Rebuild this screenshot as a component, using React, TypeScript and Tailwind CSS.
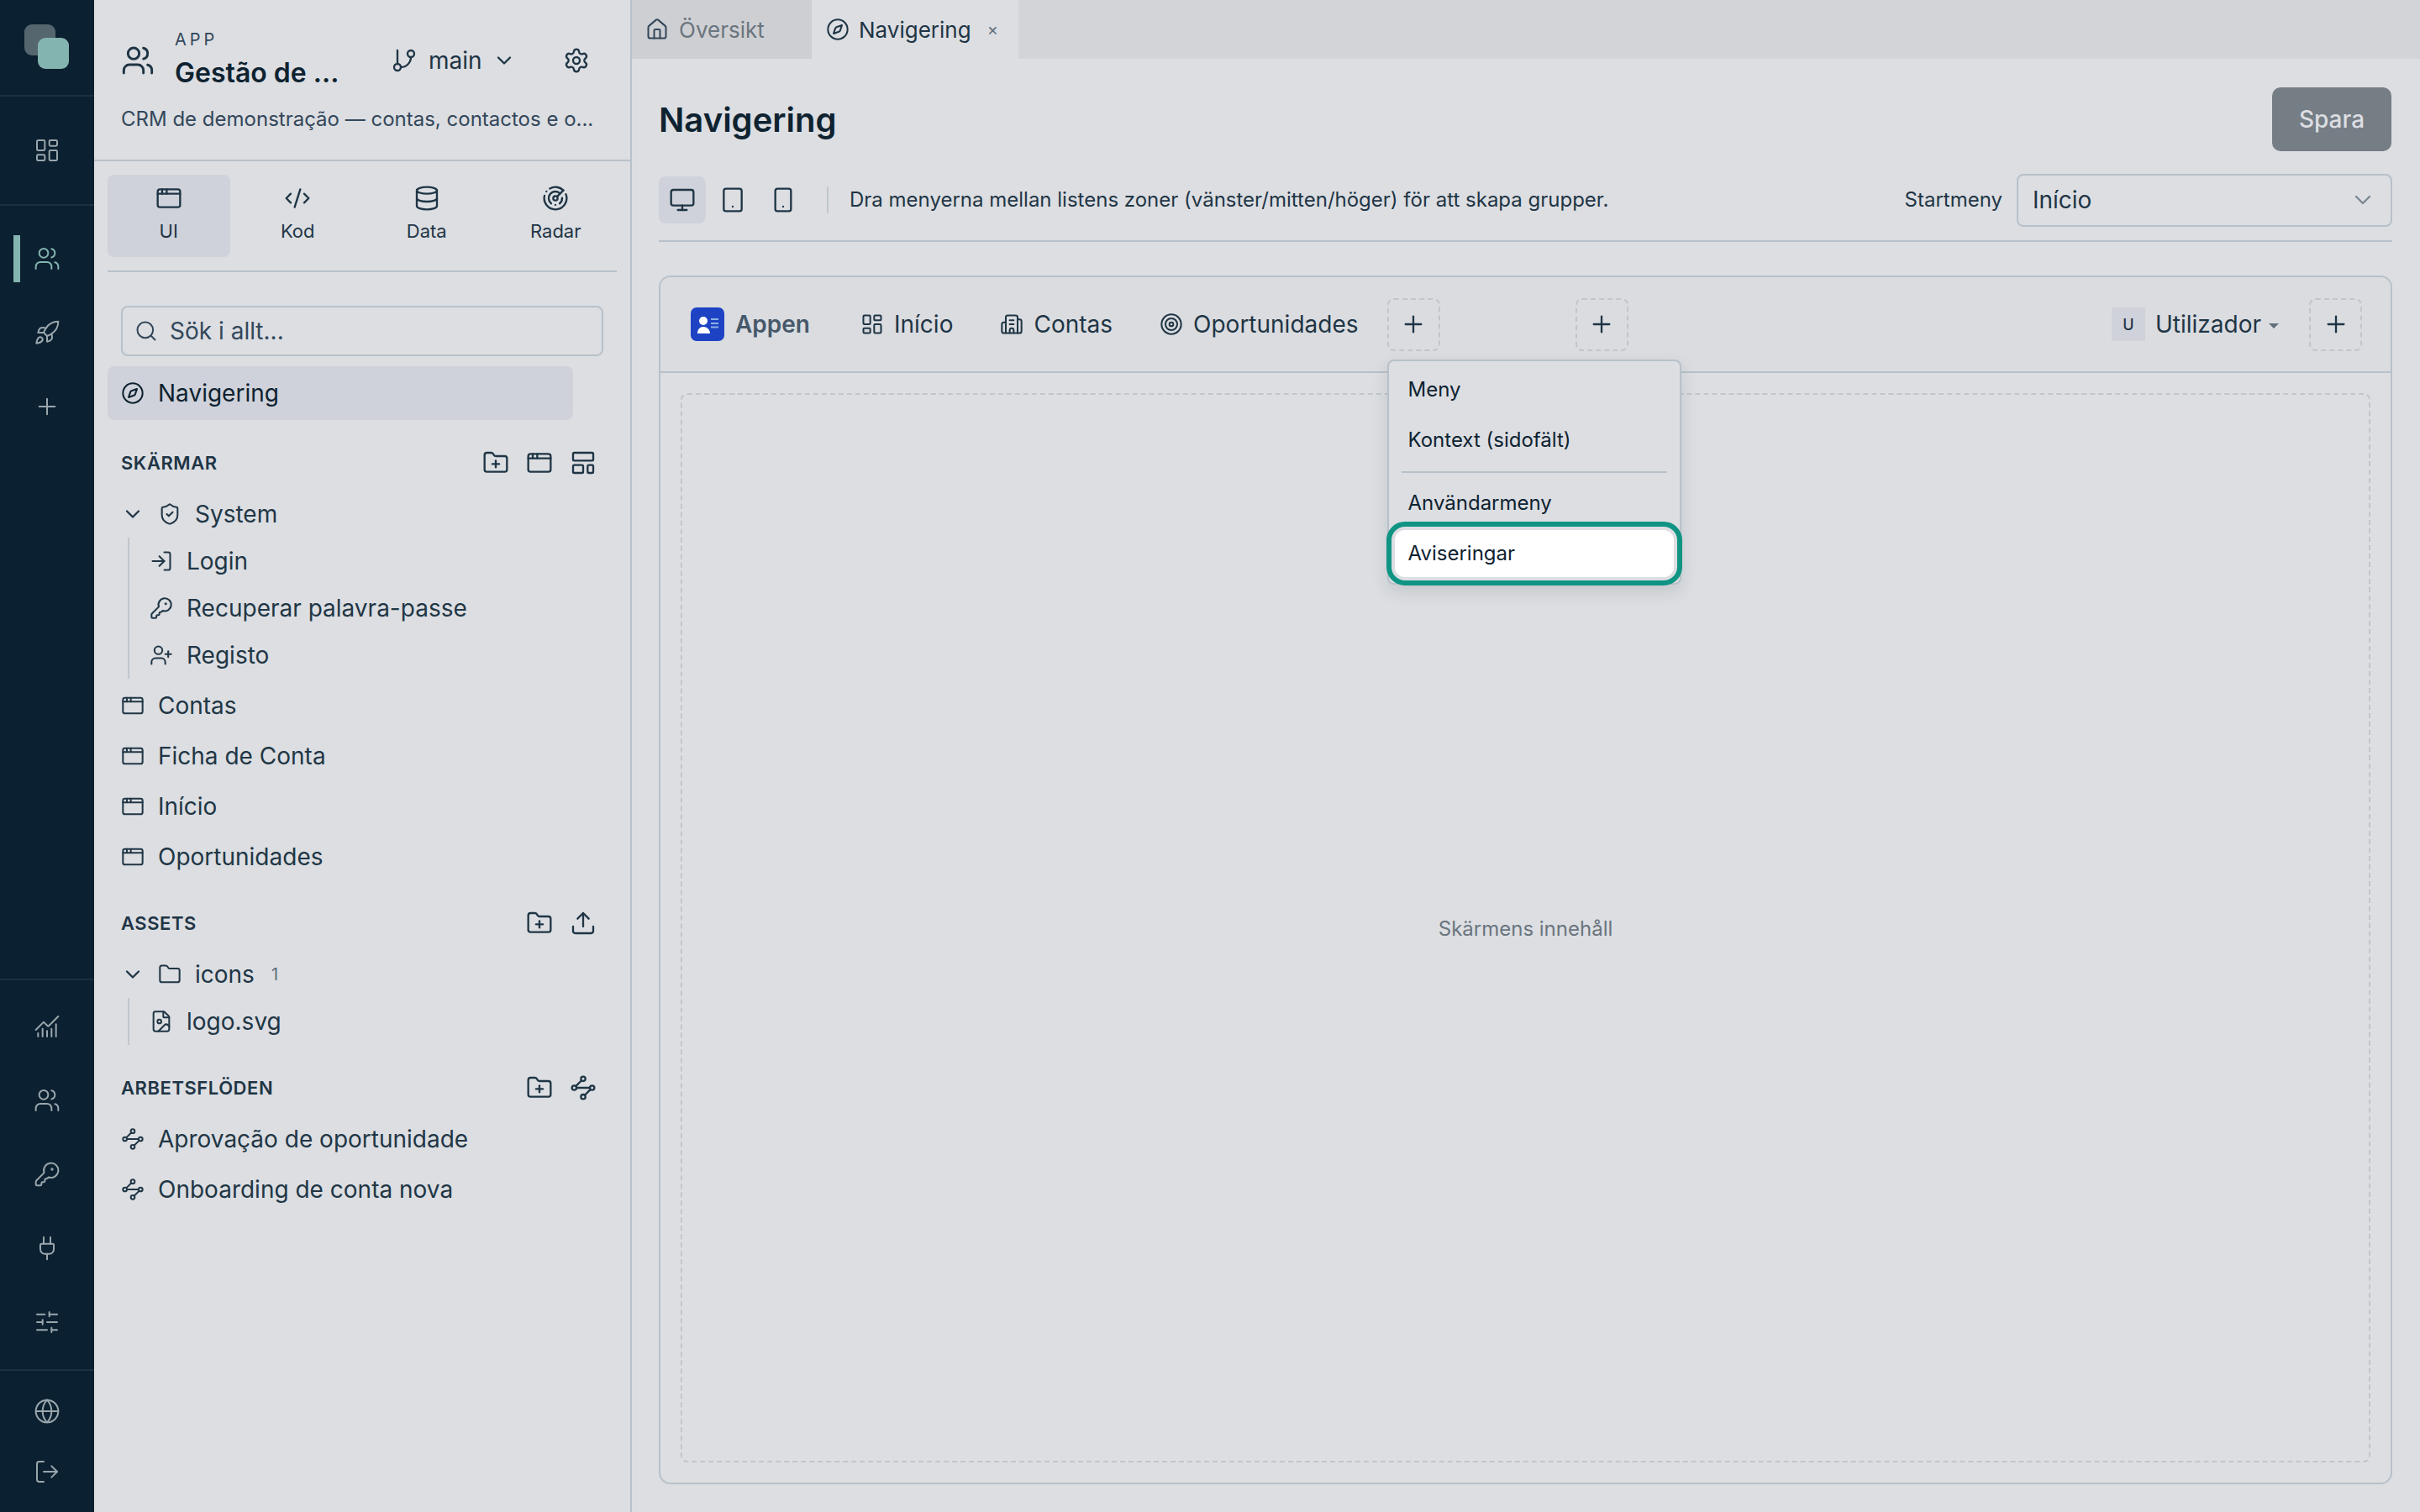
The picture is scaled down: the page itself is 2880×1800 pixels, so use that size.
import React from 'react';
import {
  AppWindow,
  Building2,
  ChartNoAxesCombined,
  ChevronDown,
  CodeXml,
  Compass,
  Database,
  FileImage,
  Folder,
  FolderPlus,
  GitBranch,
  Globe,
  House,
  KeyRound,
  LayoutDashboard,
  LayoutTemplate,
  LogIn,
  LogOut,
  Monitor,
  Plug,
  Plus,
  Radar,
  Rocket,
  Search,
  Settings,
  ShieldCheck,
  SlidersHorizontal,
  Smartphone,
  Tablet,
  Target,
  Upload,
  UserPlus,
  Users,
} from 'lucide-react';

// workflow glyph, same idea as lucide waypoints but with smaller nodes
const Flow = ({ size = 28, strokeWidth = 2 }: { size?: number; strokeWidth?: number }) => (
  <svg width={size} height={size} viewBox="0 0 24 24" fill="none" stroke="currentColor" strokeWidth={strokeWidth}>
    <circle cx="12" cy="4" r="2" />
    <circle cx="4" cy="12" r="2" />
    <circle cx="20" cy="12" r="2" />
    <circle cx="12" cy="20" r="2" />
    <path d="M10.6 5.4 5.4 10.6M6 12h12M13.4 18.6l5.2-5.2" />
  </svg>
);

const RailItem = ({ icon: Icon, active, tall }: { icon: any; active?: boolean; tall?: boolean }) => (
  <div className={`relative flex items-center justify-center ${tall ? 'h-[72px]' : 'h-[88px]'}`}>
    {active && <div className="absolute left-[16px] top-[16px] h-[56px] w-[8px] bg-[#84b4b0]" />}
    <Icon size={32} strokeWidth={1.5} className={active ? 'text-[#84b4b0]' : 'text-[#9aa6ad]'} />
  </div>
);

const Rail = () => (
  <div className="flex w-[112px] shrink-0 flex-col bg-[#0b2030]">
    <div className="h-[115px] border-b-2 border-[#1a3141] pl-[29px] pt-[29px]">
      <svg width="53" height="53" viewBox="0 0 53 53">
        <rect x="0" y="0" width="37" height="37" rx="9" fill="#56666f" />
        <rect x="16" y="16" width="37" height="37" rx="9" fill="#84b4b0" />
      </svg>
    </div>
    <div className="flex h-[130px] items-center justify-center border-b-2 border-[#1a3141]">
      <LayoutDashboard size={32} strokeWidth={1.5} className="text-[#9aa6ad]" />
    </div>
    <div className="flex-1 pt-[19px]">
      <RailItem icon={Users} active />
      <RailItem icon={Rocket} />
      <RailItem icon={Plus} />
    </div>
    <div className="border-t-2 border-[#1a3141] pb-[12px] pt-[11px]">
      <RailItem icon={ChartNoAxesCombined} />
      <RailItem icon={Users} />
      <RailItem icon={KeyRound} />
      <RailItem icon={Plug} />
      <RailItem icon={SlidersHorizontal} />
    </div>
    <div className="h-[170px] border-t-2 border-[#1a3141] pt-[12px]">
      <RailItem icon={Globe} tall />
      <RailItem icon={LogOut} tall />
    </div>
  </div>
);

const SectionHeader = ({ title, icons }: { title: string; icons: any[] }) => (
  <div className="ml-[32px] mr-[40px] flex h-[40px] items-center justify-between">
    <span className="text-[22px] font-semibold tracking-[0.55px] text-[#1f3545]">{title}</span>
    <div className="flex items-center gap-[20px] text-[#1f3545]">
      {icons.map((Icon, i) => (
        <Icon key={i} size={32} strokeWidth={1.75} />
      ))}
    </div>
  </div>
);

const TreeRow = ({ icon: Icon, label }: { icon: any; label: string }) => (
  <div className="flex h-[60px] items-center gap-[16px] pl-[32px] text-[28px] text-[#213645]">
    <Icon size={28} strokeWidth={1.75} />
    <span>{label}</span>
  </div>
);

const ChildRow = ({ icon: Icon, label }: { icon: any; label: string }) => (
  <div className="flex h-[56px] items-center gap-[16px] text-[28px] text-[#213645]">
    <Icon size={28} strokeWidth={1.75} />
    <span>{label}</span>
  </div>
);

const GroupRow = ({ icon: Icon, label, count }: { icon: any; label: string; count?: string }) => (
  <div className="mt-[13px] flex h-[56px] items-center pl-[32px] text-[28px] text-[#213645]">
    <ChevronDown size={28} strokeWidth={2} />
    <Icon size={28} strokeWidth={1.75} className="ml-[16px]" />
    <span className="ml-[16px]">{label}</span>
    {count && <span className="ml-[20px] text-[20px] text-[#5f6e7a]">{count}</span>}
  </div>
);

const Sidebar = () => (
  <div className="w-[640px] shrink-0 border-r-2 border-[#b8c1c9] bg-[#dcdee2]">
    <div className="h-[192px] border-b-2 border-[#b8c1c9] px-[32px] pt-[32px]">
      <div className="flex h-[80px] items-center">
        <Users size={40} strokeWidth={1.75} className="text-[#1f3545]" />
        <div className="ml-[24px] w-[224px]">
          <div className="text-[20px] leading-[30px] tracking-[4px] text-[#33475a]">APP</div>
          <div className="text-[32px] font-semibold leading-[50px] text-[#0e2230]">Gestão de ...</div>
        </div>
        <GitBranch size={32} strokeWidth={1.75} className="ml-[33px] text-[#1f3545]" />
        <span className="ml-[13px] text-[28px] text-[#1f3545]">main</span>
        <ChevronDown size={28} strokeWidth={2} className="ml-[12px] text-[#1f3545]" />
        <Settings size={32} strokeWidth={1.75} className="ml-[56px] text-[#1f3545]" />
      </div>
      <div className="mt-[15px] whitespace-nowrap text-[24px] leading-[30px] text-[#33475a]">
        CRM de demonstração — contas, contactos e o...
      </div>
    </div>

    <div className="mx-[16px] grid w-[606px] grid-cols-4 gap-[8px] border-b-2 border-[#b8c1c9] pb-[16px] pt-[16px]">
      {[
        { icon: AppWindow, label: 'UI', active: true },
        { icon: CodeXml, label: 'Kod' },
        { icon: Database, label: 'Data' },
        { icon: Radar, label: 'Radar' },
      ].map((t) => (
        <div
          key={t.label}
          className={`flex h-[98px] flex-col items-center gap-[8px] rounded-[8px] pt-[12px] text-[22px] text-[#1f3545] ${
            t.active ? 'bg-[#cfd2da]' : ''
          }`}
        >
          <t.icon size={32} strokeWidth={1.75} />
          <span className="leading-[30px]">{t.label}</span>
        </div>
      ))}
    </div>

    <div className="ml-[32px] mt-[40px] flex h-[60px] w-[574px] items-center gap-[14px] rounded-[8px] border-2 border-[#b8c1c9] pl-[14px] text-[28px] text-[#33475a]">
      <Search size={28} strokeWidth={1.75} />
      <span>Sök i allt...</span>
    </div>
    <div className="ml-[16px] mt-[12px] flex h-[64px] w-[554px] items-center gap-[16px] rounded-[8px] bg-[#cfd2da] pl-[16px] text-[28px] text-[#0e2230]">
      <Compass size={28} strokeWidth={1.75} />
      <span>Navigering</span>
    </div>

    <div className="mt-[31px]">
      <SectionHeader title="SKÄRMAR" icons={[FolderPlus, AppWindow, LayoutTemplate]} />
      <GroupRow icon={ShieldCheck} label="System" />
      <div className="ml-[40px] border-l-2 border-[#c0c6cd] pl-[24px]">
        <ChildRow icon={LogIn} label="Login" />
        <ChildRow icon={KeyRound} label="Recuperar palavra-passe" />
        <ChildRow icon={UserPlus} label="Registo" />
      </div>
      <div className="mt-[2px]">
        <TreeRow icon={AppWindow} label="Contas" />
        <TreeRow icon={AppWindow} label="Ficha de Conta" />
        <TreeRow icon={AppWindow} label="Início" />
        <TreeRow icon={AppWindow} label="Oportunidades" />
      </div>
    </div>

    <div className="mt-[29px]">
      <SectionHeader title="ASSETS" icons={[FolderPlus, Upload]} />
      <GroupRow icon={Folder} label="icons" count="1" />
      <div className="ml-[40px] border-l-2 border-[#c0c6cd] pl-[24px]">
        <ChildRow icon={FileImage} label="logo.svg" />
      </div>
    </div>

    <div className="mt-[31px]">
      <SectionHeader title="ARBETSFLÖDEN" icons={[FolderPlus, Flow]} />
      <div className="mt-[11px]">
        <TreeRow icon={Flow} label="Aprovação de oportunidade" />
        <TreeRow icon={Flow} label="Onboarding de conta nova" />
      </div>
    </div>
  </div>
);

const AppLogo = () => (
  <svg width="40" height="40" viewBox="0 0 40 40">
    <rect width="40" height="40" rx="7" fill="#1d43c4" />
    <circle cx="15" cy="16" r="5" fill="#fff" />
    <path d="M8 31c0-5 3-8 7-8s8 3 8 8z" fill="#fff" />
    <path d="M24 14h9M24 19h9M24 23.5h9" stroke="#8fb0e8" strokeWidth="2.2" />
  </svg>
);

const AddButton = ({ className }: { className?: string }) => (
  <div
    className={`flex h-[63px] w-[63px] items-center justify-center rounded-[8px] border-2 border-dashed border-[#c0c6cd] text-[#1f3545] ${className ?? ''}`}
  >
    <Plus size={32} strokeWidth={1.75} />
  </div>
);

const AddMenu = () => (
  <div className="absolute left-0 top-[73px] z-10 w-[350px] rounded-[8px] border-2 border-[#b8c1c9] bg-[#dcdee2] px-[7px] pb-[7px] pt-[6px] text-[24px] text-[#0e2230] shadow-[0_8px_20px_rgba(15,30,45,0.12)]">
    <div className="flex h-[56px] items-center px-[16px]">Meny</div>
    <div className="mt-[4px] flex h-[56px] items-center px-[16px]">Kontext (sidofält)</div>
    <div className="mx-[8px] mb-[8px] mt-[9px] h-[2px] bg-[#b8c1c9]" />
    <div className="flex h-[56px] items-center px-[16px]">Användarmeny</div>
    <div className="mt-[4px] flex h-[56px] items-center rounded-[12px] bg-white px-[16px] outline-[6px] outline-offset-[4px] outline-[#0f9484]">
      Aviseringar
    </div>
  </div>
);

const Main = () => (
  <div className="flex min-w-0 flex-1 flex-col bg-[#dcdee2]">
    <div className="flex h-[70px] shrink-0 bg-[#d2d4d8] text-[26px]">
      <div className="flex w-[214px] items-center gap-[12px] bg-[#cecfd3] pl-[16px] text-[#6a757e]">
        <House size={28} strokeWidth={1.75} className="text-[#33475a]" />
        <span>Översikt</span>
      </div>
      <div className="flex w-[246px] items-center gap-[11px] bg-[#dcdee2] pl-[17px] text-[#1f3545]">
        <Compass size={28} strokeWidth={1.75} />
        <span>Navigering</span>
        <span className="ml-[8px] text-[20px] text-[#5f6e7a]">×</span>
      </div>
    </div>

    <div className="flex flex-1 flex-col pb-[33px] pl-[32px] pr-[33px] pt-[34px]">
      <div className="flex h-[76px] items-center justify-between">
        <h1 className="pt-[2px] text-[40px] font-semibold text-[#0e2230]">Navigering</h1>
        <button className="mr-[1px] flex h-[76px] w-[142px] items-center justify-center rounded-[10px] bg-[#757d85] text-[28px] font-medium text-[#dcdee2]">
          Spara
        </button>
      </div>

      <div className="mt-[26px] flex h-[82px] items-start border-b-2 border-[#b8c1c9]">
        <div className="flex h-[64px] items-center">
          <div className="flex gap-[4px] text-[#1f3545]">
            <div className="flex h-[56px] w-[56px] items-center justify-center rounded-[8px] bg-[#cfd2da]">
              <Monitor size={32} strokeWidth={1.75} />
            </div>
            <div className="flex h-[56px] w-[56px] items-center justify-center">
              <Tablet size={32} strokeWidth={1.75} />
            </div>
            <div className="flex h-[56px] w-[56px] items-center justify-center">
              <Smartphone size={32} strokeWidth={1.75} />
            </div>
          </div>
          <div className="ml-[24px] h-[32px] w-[2px] bg-[#c0c6cd]" />
          <span className="ml-[25px] text-[24px] text-[#1f3545]">
            Dra menyerna mellan listens zoner (vänster/mitten/höger) för att skapa grupper.
          </span>
        </div>
        <div className="ml-auto flex h-[64px] items-center">
          <span className="text-[24px] text-[#1f3545]">Startmeny</span>
          <div className="ml-[17px] flex h-[63px] w-[447px] items-center justify-between rounded-[8px] border-2 border-[#b8c1c9] pl-[17px] pr-[17px] text-[28px] text-[#1f3545]">
            <span>Início</span>
            <ChevronDown size={32} strokeWidth={1.75} className="text-[#7b8791]" />
          </div>
        </div>
      </div>

      <div className="mt-[40px] flex flex-1 flex-col rounded-[14px] border-2 border-[#b8c1c9]">
        <div className="flex h-[114px] shrink-0 items-center rounded-t-[12px] border-b-2 border-[#b8c1c9] bg-[#dadce0] pl-[36px] pr-[34px] text-[28px] text-[#1f3545]">
          <div className="flex items-center gap-[13px] font-semibold text-[#46586a]">
            <AppLogo />
            <span>Appen</span>
          </div>
          <div className="ml-[60px] flex items-center gap-[12px]">
            <LayoutDashboard size={28} strokeWidth={1.75} />
            <span>Início</span>
          </div>
          <div className="ml-[56px] flex items-center gap-[12px]">
            <Building2 size={28} strokeWidth={1.75} />
            <span>Contas</span>
          </div>
          <div className="ml-[56px] flex items-center gap-[12px]">
            <Target size={28} strokeWidth={1.75} />
            <span>Oportunidades</span>
          </div>
          <div className="relative ml-[34px]">
            <AddButton />
            <AddMenu />
          </div>
          <AddButton className="ml-[161px]" />
          <div className="ml-auto flex items-center">
            <div className="flex h-[40px] w-[40px] items-center justify-center bg-[#cfd2da] text-[18px] font-medium">U</div>
            <span className="ml-[12px]">Utilizador</span>
            <span className="ml-[9px] mt-[4px] h-0 w-0 border-x-[6px] border-t-[6px] border-x-transparent border-t-[#5f6e7a]" />
            <AddButton className="ml-[36px]" />
          </div>
        </div>
        <div className="flex flex-1 p-[24px]">
          <div className="flex flex-1 items-center justify-center rounded-[8px] border-2 border-dashed border-[#c0c6cd] pt-[2px] text-[24px] text-[#6a757e]">
            Skärmens innehåll
          </div>
        </div>
      </div>
    </div>
  </div>
);

const App = () => {
  return (
    <div className="flex h-screen w-screen overflow-hidden bg-[#dcdee2] [font-family:Inter,sans-serif]">
      <Rail />
      <Sidebar />
      <Main />
    </div>
  );
};

export default App;
